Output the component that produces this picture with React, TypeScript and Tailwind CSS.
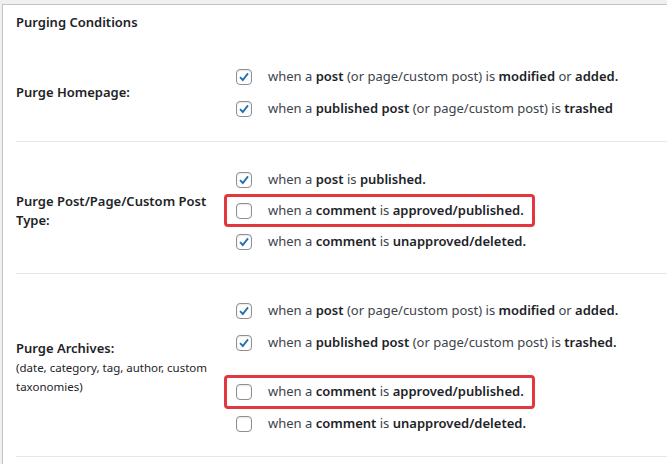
import type { ReactNode } from "react";

const Box = ({ checked }: { checked: boolean }) => (
  <span className="w-4 h-4 shrink-0 border border-[#8c8f94] rounded-[4px] bg-white flex items-center justify-center shadow-[inset_0_1px_2px_rgba(0,0,0,0.1)]">
    {checked && (
      <svg viewBox="0 0 16 16" className="w-[14px] h-[14px]">
        <path d="M3.5 8.2 L6.6 11.4 L12.6 3.8" fill="none" stroke="#2271b1" strokeWidth="2.2" />
      </svg>
    )}
  </span>
);

const Row = ({ checked, hl, h = "h-8", children }: { checked: boolean; hl?: boolean; h?: string; children: ReactNode }) => (
  <div className={`relative flex items-center gap-4 ${h}`}>
    {hl && <span className="absolute -left-3 -top-px -bottom-px w-[311px] border-[3px] border-[#e0383d] rounded-[4px]" />}
    <Box checked={checked} />
    <span>{children}</span>
  </div>
);

const B = ({ children }: { children: ReactNode }) => <b className="font-semibold text-[#1d2327]">{children}</b>;

export default function App() {
  return (
    <div className="w-[667px] h-[464px] bg-[#f0f0f1] pt-1 pl-[2px] overflow-hidden text-[13px] text-[#3c434a] font-['Liberation_Sans',Arial,sans-serif]">
      <div className="bg-white border-l border-t border-[#c3c4c7] h-full pl-[13px]">
        <div className="h-9 flex items-center font-semibold text-[#1d2327]">Purging Conditions</div>

        <div className="flex items-center mt-5 pb-4 border-b border-[#e7e7e9]">
          <div className="w-[220px] font-semibold text-[#1d2327]">Purge Homepage:</div>
          <div>
            <Row checked>when a <B>post</B> (or page/custom post) is <B>modified</B> or <B>added.</B></Row>
            <Row checked>when a <B>published post</B> (or page/custom post) is <B>trashed</B></Row>
          </div>
        </div>

        <div className="flex items-center pt-[22px] pb-4 border-b border-[#e7e7e9]">
          <div className="w-[220px] font-semibold text-[#1d2327] leading-[19px] pr-6">Purge Post/Page/Custom Post Type:</div>
          <div>
            <Row checked h="h-[31px]">when a <B>post</B> is <B>published.</B></Row>
            <Row checked={false} hl h="h-[31px]">when a <B>comment</B> is <B>approved/published.</B></Row>
            <Row checked h="h-[31px]">when a <B>comment</B> is <B>unapproved/deleted.</B></Row>
          </div>
        </div>

        <div className="flex items-center pt-[21px] pb-4 border-b border-[#e7e7e9]">
          <div className="w-[220px] text-[#1d2327]">
            <div className="font-semibold leading-[19px]">Purge Archives:</div>
            <div className="text-[11.5px] leading-[19px] pr-2">(date, category, tag, author, custom taxonomies)</div>
          </div>
          <div>
            <Row checked>when a <B>post</B> (or page/custom post) is <B>modified</B> or <B>added.</B></Row>
            <Row checked>when a <B>published post</B> (or page/custom post) is <B>trashed.</B></Row>
            <div className="h-[17px]" />
            <Row checked={false} hl>when a <B>comment</B> is <B>approved/published.</B></Row>
            <Row checked={false}>when a <B>comment</B> is <B>unapproved/deleted.</B></Row>
          </div>
        </div>
      </div>
    </div>
  );
}
